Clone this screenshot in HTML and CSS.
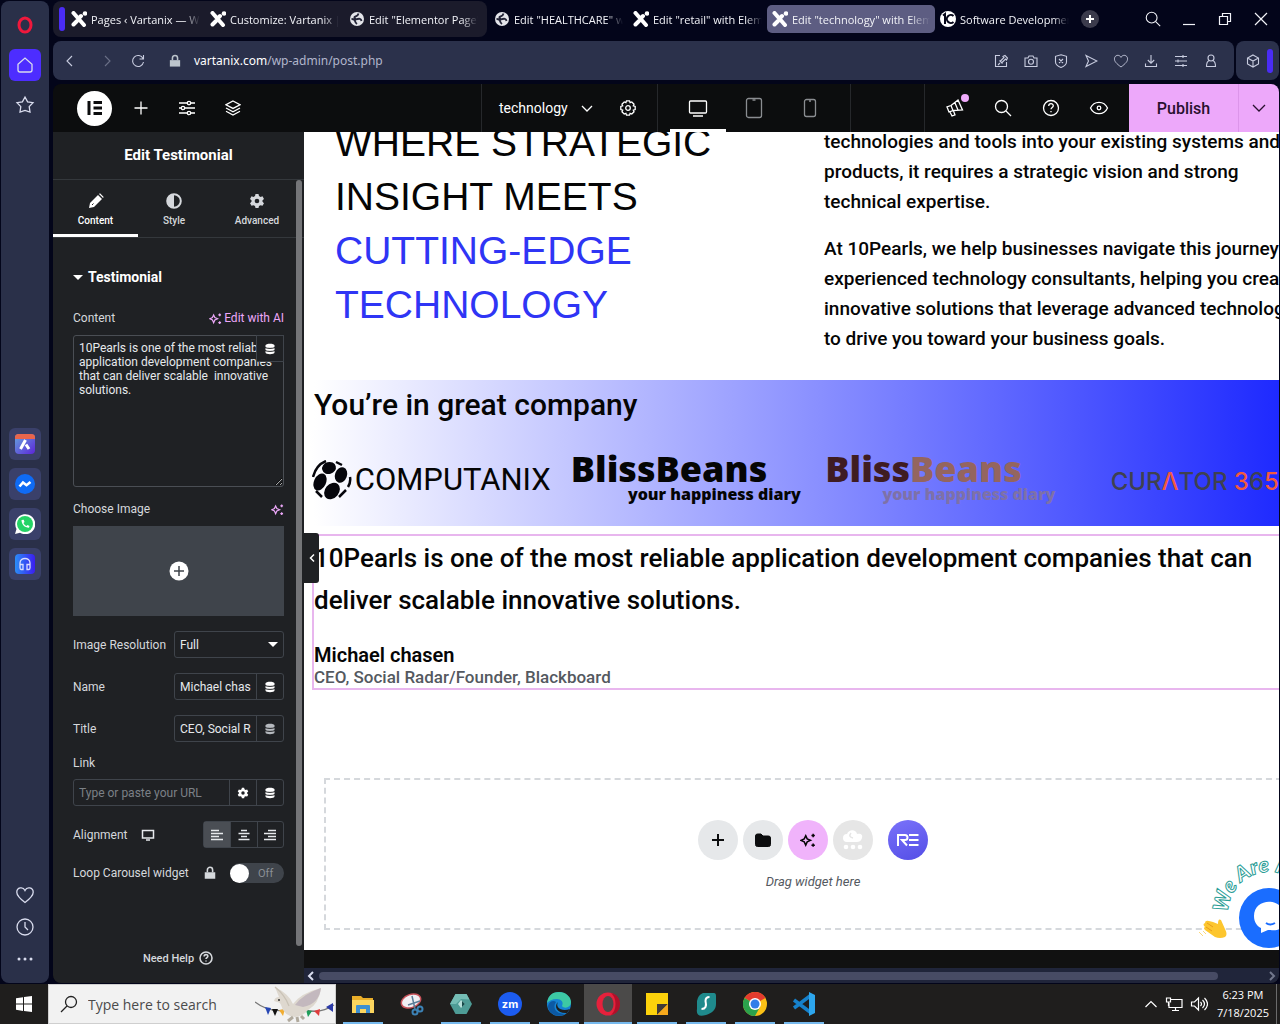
FILE: index.html
```html
<!DOCTYPE html>
<html lang="en">
<head>
    <meta charset="UTF-8">
    <meta name="viewport" content="width=device-width, initial-scale=1.0">
    <title>Edit "technology" with Elementor</title>
    <link rel="stylesheet" href="styles.css">
</head>
<body>
    <!-- Shared icons -->
    <svg class="sprite" aria-hidden="true">
        <symbol id="i-x" viewBox="0 0 16 16"><path d="M2.500 2 13 14" stroke="#fff" stroke-width="4" stroke-linecap="round"/><path d="M2.500 13.500 6 10M9 6l1-1" stroke="#fff" stroke-width="4" stroke-linecap="round"/><circle cx="14" cy="2.500" r="2.300" fill="#fff"/></symbol>
        <symbol id="i-globe" viewBox="0 0 16 16"><circle cx="8" cy="8" r="7" fill="#e4e5ea" stroke="none"/><path d="M2.500 8q3 0 3.500 2t2 3M9.500 2.500Q9 5 6.500 5.500T7 8.500q5-2 5.500 1.500" stroke="#242538" stroke-width="1.800"/></symbol>
        <symbol id="i-db" viewBox="0 0 12 12"><path d="M1.500 2.500C1.500.3 10.500.3 10.500 2.500v7c0 2.200-9 2.200-9 0z" fill="currentColor" stroke="none"/><path d="M1 4.500c2 1.200 8 1.200 10 0M1 7.500c2 1.200 8 1.200 10 0" stroke="#1f2124" stroke-width="1"/></symbol>
        <symbol id="i-gear" viewBox="0 0 16 16"><path d="M6.500 1h3l.5 2 1.500.9 2-.6 1.500 2.600-1.500 1.400v1.500l1.500 1.400-1.500 2.600-2-.6-1.500.9-.5 2h-3L6 13.100l-1.500-.9-2 .6L1 10.200l1.500-1.400V7.300L1 5.900l1.500-2.600 2 .6L6 3z" fill="currentColor" stroke="none"/><circle cx="8" cy="8" r="2.300" fill="#1f2124" stroke="none"/></symbol>
        <symbol id="i-sparkle" viewBox="0 0 14 14"><path d="M5 3.200 6.300 6 9.200 7.300 6.300 8.600 5 11.500 3.700 8.600.8 7.300 3.700 6zM11.500 1.500v3M10 3h3M11.500 10v3M10 11.500h3" stroke="currentColor" stroke-width="1.300"/></symbol>
        <symbol id="i-search" viewBox="0 0 20 20"><circle cx="8.500" cy="8.500" r="6"/><path d="m13 13 5 5"/></symbol>
        <symbol id="i-help" viewBox="0 0 20 20"><circle cx="10" cy="10" r="7.500"/><path d="M7.700 8c0-3 4.600-3 4.600-.2 0 1.700-2.300 1.700-2.300 3.500M10 13v1.300"/></symbol>
        <symbol id="i-heart" viewBox="0 0 20 20"><path d="M10 17.500C4 13 1.800 10.500 1.800 7.300 1.800 2.500 8 1.200 10 5.500c2-4.300 8.200-3 8.200 1.800 0 3.200-2.200 5.700-8.200 10.200z"/></symbol>
        <symbol id="i-lock" viewBox="0 0 14 16"><path d="M1 7h12v7.500H1z" fill="currentColor" stroke="none"/><path d="M4 7V4.500c0-4 6-4 6 0V7" stroke="currentColor" stroke-width="1.800"/></symbol>
    </svg>

    <main class="desktop">
        <nav class="rail" aria-label="Browser sidebar">
            <a href="#" class="rail-btn" aria-label="Opera"><svg width="20" height="20" viewBox="0 0 20 20"><ellipse cx="10" cy="10" rx="6" ry="7" stroke="#f0183c" stroke-width="3"/></svg></a>
            <a href="#" class="rail-btn rail-home" aria-label="Home"><svg width="20" height="20" viewBox="0 0 20 20"><path d="M3 9.200 10 3l7 6.200V15q0 2-2 2H5q-2 0-2-2z"/></svg></a>
            <a href="#" class="rail-btn" aria-label="Bookmarks"><svg width="20" height="20" viewBox="0 0 20 20"><path d="m10 2 2.600 4.800 5.400.9-3.800 3.900.8 5.400-5-1.600L5 17l.8-5.400L2 7.700l5.400-.9z"/></svg></a>
            <div class="rail-apps">
                <a href="#" class="rail-app" aria-label="Aria"><svg width="20" height="20" viewBox="0 0 20 20"><defs><linearGradient id="aria" x2="1" y2="1"><stop stop-color="#65a7dd"/><stop offset="1" stop-color="#5c25d8"/></linearGradient></defs><rect width="20" height="20" rx="4" fill="url(#aria)"/><path d="M0 5V3q0-3 4-3h12q4 0 4 3v2z" fill="#e8654c"/><path d="m5.500 15 5-9M11 10.500l3 4.500" stroke="#fff" stroke-width="3"/></svg></a>
                <a href="#" class="rail-app" aria-label="Messenger"><svg width="20" height="20" viewBox="0 0 20 20"><circle cx="10" cy="10" r="10" fill="#0f6bf5"/><path d="m4.500 12.500 3.500-4 3.500 2.700 4-3.200" stroke="#fff" stroke-width="2.600"/></svg></a>
                <a href="#" class="rail-app" aria-label="WhatsApp"><svg width="20" height="20" viewBox="0 0 20 20"><path d="m0 20 1.500-5A10 10 0 1 1 5 18.700z" fill="#fff"/><circle cx="10" cy="10" r="8" fill="#25d366"/><path d="M6.500 6c0 4.500 3 7.500 7.500 7.800l.5-1.800-2-1-1 1c-1.500-.6-2.500-1.600-3-3l1-1-.8-2.200z" fill="#fff"/></svg></a>
                <a href="#" class="rail-app" aria-label="Player"><svg width="20" height="20" viewBox="0 0 20 20"><defs><linearGradient id="play" x2="1"><stop stop-color="#2b8df7"/><stop offset="1" stop-color="#3b1df0"/></linearGradient></defs><rect width="20" height="20" rx="4" fill="url(#play)"/><path d="M5 14V9c0-6 10-6 10 0v5M5 10.500h3v5H6q-1 0-1-2zM15 10.500h-3v5h2q1 0 1-2z" stroke="#d9dcff"/></svg></a>
            </div>
            <div class="rail-bottom">
                <a href="#" class="rail-tool" aria-label="Pinboards"><svg width="20" height="20"><use href="#i-heart"/></svg></a>
                <a href="#" class="rail-tool" aria-label="History"><svg width="20" height="20" viewBox="0 0 20 20"><circle cx="10" cy="10" r="8"/><path d="M10 5v5l3 3"/></svg></a>
                <a href="#" class="rail-tool" aria-label="More"><svg width="20" height="20" viewBox="0 0 20 20"><g fill="#d9dcee" stroke="none"><circle cx="4" cy="10" r="1.500"/><circle cx="10" cy="10" r="1.500"/><circle cx="16" cy="10" r="1.500"/></g></svg></a>
            </div>
        </nav>

        <div class="browser">
            <div class="tabs">
                <div class="tab-group">
                    <span class="tab-mark"></span>
                    <a href="#" class="tab"><svg width="16" height="16"><use href="#i-x"/></svg><span>Pages ‹ Vartanix — W</span></a>
                    <a href="#" class="tab"><svg width="16" height="16"><use href="#i-x"/></svg><span>Customize: Vartanix |</span></a>
                    <a href="#" class="tab"><svg width="16" height="16"><use href="#i-globe"/></svg><span>Edit "Elementor Page"</span></a>
                </div>
                <a href="#" class="tab"><svg width="16" height="16"><use href="#i-globe"/></svg><span>Edit "HEALTHCARE" w</span></a>
                <a href="#" class="tab"><svg width="16" height="16"><use href="#i-x"/></svg><span>Edit "retail" with Elementor</span></a>
                <a href="#" class="tab tab-active"><svg width="16" height="16"><use href="#i-x"/></svg><span>Edit "technology" with Elementor</span></a>
                <a href="#" class="tab"><svg width="16" height="16" viewBox="0 0 16 16"><circle cx="8" cy="8" r="8" fill="#fff"/><path d="M3 4.500 5 3v10M13.500 5A4 4 0 1 0 13.500 11" stroke="#06071a" stroke-width="2"/></svg><span>Software Development</span></a>
                <button class="new-tab" aria-label="New tab"><svg width="12" height="12" viewBox="0 0 12 12"><path d="M6 2v8M2 6h8" stroke="#fff" stroke-width="2"/></svg></button>
                <div class="window-btns">
                    <button aria-label="Search tabs"><svg width="18" height="18"><use href="#i-search"/></svg></button>
                    <button aria-label="Minimize"><svg width="14" height="14" viewBox="0 0 14 14"><path d="M1 12.500h12"/></svg></button>
                    <button aria-label="Restore"><svg width="14" height="14" viewBox="0 0 14 14"><path d="M1.500 4.500h8v8h-8zM4.500 4V1.500h8v8H10"/></svg></button>
                    <button aria-label="Close"><svg width="14" height="14" viewBox="0 0 14 14"><path d="m1 1 12 12M13 1 1 13"/></svg></button>
                </div>
            </div>

            <div class="address-row">
                <div class="address">
                    <button class="nav-btn" aria-label="Back"><svg width="14" height="14" viewBox="0 0 14 14"><path d="M9 2 4 7l5 5"/></svg></button>
                    <button class="nav-btn nav-off" aria-label="Forward"><svg width="14" height="14" viewBox="0 0 14 14"><path d="m5 2 5 5-5 5"/></svg></button>
                    <button class="nav-btn" aria-label="Reload"><svg width="14" height="14" viewBox="0 0 14 14"><path d="M12 4.500A5.500 5.500 0 1 0 12.500 8M12.500 1v4h-4"/></svg></button>
                    <svg class="url-lock" width="12" height="14"><use href="#i-lock"/></svg>
                    <span class="url"><b>vartanix.com</b>/wp-admin/post.php</span>
                    <div class="url-tools">
                        <button aria-label="Pin"><svg width="14" height="14" viewBox="0 0 14 14"><path d="M6 1.500H1.500v11h11V8M6 9l-2 2M5.500 6.500l3 3M6.500 7 10 3.500 9 2.500l2-1 2.500 2.500-1 2-1-1L8 8.500"/></svg></button>
                        <button aria-label="Snapshot"><svg width="14" height="14" viewBox="0 0 14 14"><path d="M1 4h3l1-2h4l1 2h3v8.500H1z"/><circle cx="7" cy="7.800" r="2.500"/></svg></button>
                        <button aria-label="Ad blocker"><svg width="14" height="14" viewBox="0 0 14 14"><path d="m7 .7 5.500 1.600V8c0 3-3 4.500-5.500 5.500C4.500 12.500 1.500 11 1.500 8V2.300zM5 5l4 4M9 5 5 9"/></svg></button>
                        <button aria-label="Send"><svg width="14" height="14" viewBox="0 0 14 14"><path d="m2 1.500 11 5.500L2 12.500 4.500 7z"/></svg></button>
                        <button aria-label="Favorite"><svg width="16" height="16"><use href="#i-heart"/></svg></button>
                        <button aria-label="Downloads"><svg width="14" height="14" viewBox="0 0 14 14"><path d="M7 1v8M3.800 6 7 9.200 10.200 6M1.500 9.500v3h11v-3"/></svg></button>
                        <button aria-label="Easy setup"><svg width="14" height="14" viewBox="0 0 14 14"><path d="M1 2.500h12M1 7h12M1 11.500h12M9 1v3M4 5.500v3M9 10v3"/></svg></button>
                        <button aria-label="Profile"><svg width="14" height="14" viewBox="0 0 14 14"><circle cx="7" cy="4" r="3"/><path d="M5 6.800C3 7.500 2.500 9 2.500 12.500h9C11.500 9 11 7.500 9 6.800"/></svg></button>
                    </div>
                </div>
                <div class="extensions">
                    <button aria-label="Extensions"><svg width="14" height="14" viewBox="0 0 14 14"><path d="m7 1 5.500 3v6L7 13 1.500 10V4zM1.500 4 7 7l5.500-3M7 7v6"/></svg></button>
                    <span class="ext-mark"></span>
                </div>
            </div>

            <div class="editor">
                <header class="topbar">
                    <div class="top-left">
                        <button class="logo" aria-label="Elementor"><svg width="16" height="16" viewBox="0 0 16 16"><path d="M2 1v14M6.500 2.500H15M6.500 8H15M6.500 13.500H15" stroke="#0c0d0e" stroke-width="3"/></svg></button>
                        <button aria-label="Add element"><svg width="16" height="16" viewBox="0 0 16 16"><path d="M8 1.500v13M1.500 8h13"/></svg></button>
                        <button aria-label="Site settings"><svg width="16" height="16" viewBox="0 0 16 16"><path d="M0 3h8M12 3h4M0 8h2M6 8h10M0 13h8M12 13h4"/><circle cx="10" cy="3" r="1.700"/><circle cx="4" cy="8" r="1.700"/><circle cx="10" cy="13" r="1.700"/></svg></button>
                        <button aria-label="Structure"><svg width="16" height="16" viewBox="0 0 16 16"><path d="m8 1 7 3.700-7 3.700-7-3.700zM1 8l7 3.700L15 8M1 11.300 8 15l7-3.700"/></svg></button>
                    </div>
                    <div class="top-center">
                        <div class="doc">
                            <button class="doc-name">technology <svg width="12" height="12" viewBox="0 0 12 12"><path d="m1 4 5 5 5-5"/></svg></button>
                            <button aria-label="Page settings"><svg width="16" height="16" viewBox="0 0 16 16"><path d="M6.500.8h3l.6 1.900 1.700-.7 2.200 2.200-.7 1.700 1.900.6v3l-1.900.6.7 1.700-2.200 2.200-1.700-.7-.6 1.900h-3l-.6-1.900-1.700.7L2 11.800l.7-1.700-1.900-.6v-3l1.900-.6L2 4.200 4.200 2l1.700.7z"/><circle cx="8" cy="8" r="2.300"/></svg></button>
                        </div>
                        <div class="devices">
                            <button class="device device-on" aria-label="Desktop"><svg width="20" height="20" viewBox="0 0 20 20"><rect x="1.500" y="3" width="17" height="12" rx="1"/><path d="M5 18h10"/></svg></button>
                            <button class="device" aria-label="Tablet"><svg width="20" height="22" viewBox="0 0 20 22"><rect x="2.500" y="1.500" width="15" height="19" rx="2"/><path d="M8.500 3h3"/></svg></button>
                            <button class="device" aria-label="Mobile"><svg width="20" height="20" viewBox="0 0 20 20"><rect x="4.500" y="1.500" width="11" height="17" rx="2"/><path d="M9 3h2"/></svg></button>
                        </div>
                    </div>
                    <div class="top-right">
                        <div class="top-tools">
                            <button class="news" aria-label="What's new"><svg width="20" height="20" viewBox="0 0 20 20"><path d="m2 9 2 5 4-1.500L6 7.500zM6 7.500 13 2l4.500 10-9.500.5M5 14l2 4 3-1.200L8.500 13M10 5l3 7"/></svg><span class="dot"></span></button>
                            <button aria-label="Finder"><svg width="20" height="20"><use href="#i-search"/></svg></button>
                            <button aria-label="Help"><svg width="20" height="20"><use href="#i-help"/></svg></button>
                            <button aria-label="Preview"><svg width="20" height="20" viewBox="0 0 20 20"><path d="M1.500 10C5 2.500 15 2.500 18.500 10 15 17.500 5 17.500 1.500 10z"/><circle cx="10" cy="10" r="1.800"/></svg></button>
                        </div>
                        <button class="publish">Publish</button>
                        <button class="publish-more" aria-label="Save options"><svg width="16" height="16" viewBox="0 0 16 16"><path d="m2 5 6 6 6-6"/></svg></button>
                    </div>
                </header>

                <div class="workspace">
                    <aside class="panel">
                        <h1>Edit Testimonial</h1>
                        <div class="panel-tabs">
                            <button class="panel-tab panel-tab-on"><svg width="16" height="16" viewBox="0 0 16 16"><path d="m1 15 1-5L10 2l4 4-8 8zM11 1l1-.7L15.700 4l-.7 1z" fill="currentColor" stroke="none"/><path d="m4 12 1.500-1.500" stroke="#1f2124" stroke-width="1"/></svg>Content</button>
                            <button class="panel-tab"><svg width="16" height="16" viewBox="0 0 16 16"><circle cx="8" cy="8" r="6.800" stroke="currentColor" stroke-width="2"/><path d="M8 1.500a6.500 6.500 0 0 0 0 13z" fill="currentColor" stroke="none"/></svg>Style</button>
                            <button class="panel-tab"><svg width="16" height="16"><use href="#i-gear"/></svg>Advanced</button>
                        </div>
                        <form class="controls">
                            <h2><span class="caret"></span>Testimonial</h2>
                            <div class="row row-top">
                                <label for="content">Content</label>
                                <a href="#" class="ai"><svg width="13" height="13" viewBox="0 0 14 14"><use href="#i-sparkle" width="14" height="14"/></svg>Edit with AI</a>
                            </div>
                            <div class="area">
                                <textarea id="content">10Pearls is one of the most reliable application development companies that can deliver scalable  innovative solutions.</textarea>
                                <button type="button" class="area-db" aria-label="Dynamic tags"><svg width="12" height="12"><use href="#i-db"/></svg></button>
                            </div>
                            <div class="row row-image">
                                <span>Choose Image</span>
                                <a href="#" class="ai" aria-label="Generate with AI"><svg width="13" height="13" viewBox="0 0 14 14"><use href="#i-sparkle" width="14" height="14"/></svg></a>
                            </div>
                            <button type="button" class="media" aria-label="Choose image"><svg width="20" height="20" viewBox="0 0 20 20"><circle cx="10" cy="10" r="9.500" fill="#fff"/><path d="M10 5v10M5 10h10" stroke="#3f444b" stroke-width="1.500"/></svg></button>
                            <div class="row row-field">
                                <label for="size">Image Resolution</label>
                                <span class="field select"><select id="size"><option>Full</option></select><i class="caret"></i></span>
                            </div>
                            <div class="row row-field">
                                <label for="name">Name</label>
                                <span class="field"><input id="name" type="text" value="Michael chasen"><button type="button" aria-label="Dynamic tags"><svg width="12" height="12"><use href="#i-db"/></svg></button></span>
                            </div>
                            <div class="row row-field">
                                <label for="title">Title</label>
                                <span class="field"><input id="title" type="text" value="CEO, Social Radar/Founder, Blackboard"><button type="button" class="dim" aria-label="Dynamic tags"><svg width="12" height="12"><use href="#i-db"/></svg></button></span>
                            </div>
                            <label class="link-label" for="link">Link</label>
                            <span class="field field-wide"><input id="link" type="text" placeholder="Type or paste your URL"><button type="button" aria-label="Link options"><svg width="12" height="12"><use href="#i-gear"/></svg></button><button type="button" aria-label="Dynamic tags"><svg width="12" height="12"><use href="#i-db"/></svg></button></span>
                            <div class="row row-field">
                                <span class="with-icon">Alignment <svg width="14" height="14" viewBox="0 0 14 14"><path d="M1.500 2.500h11v7.500h-11zM5 12h4"/></svg></span>
                                <span class="field align">
                                    <button type="button" class="on" aria-label="Left"><svg width="14" height="12" viewBox="0 0 14 12"><path d="M1 1.500h8M1 4.500h12M1 7.500h8M1 10.500h12"/></svg></button>
                                    <button type="button" aria-label="Center"><svg width="14" height="12" viewBox="0 0 14 12"><path d="M4 1.500h6M1.500 4.500h11M4 7.500h6M1.500 10.500h11"/></svg></button>
                                    <button type="button" aria-label="Right"><svg width="14" height="12" viewBox="0 0 14 12"><path d="M5 1.500h8M1 4.500h12M5 7.500h8M1 10.500h12"/></svg></button>
                                </span>
                            </div>
                            <div class="row row-switch">
                                <label for="loop" class="with-icon">Loop Carousel widget <svg width="14" height="14"><use href="#i-lock"/></svg></label>
                                <span class="switch"><input id="loop" type="checkbox"><span>Off</span></span>
                            </div>
                        </form>
                        <a href="#" class="need-help">Need Help <svg width="16" height="16"><use href="#i-help"/></svg></a>
                        <span class="panel-scroll"></span>
                    </aside>

                    <section class="preview">
                        <div class="page">
                            <div class="hero">
                                <h2>WHERE STRATEGIC<br>INSIGHT MEETS<br><span>CUTTING-EDGE<br>TECHNOLOGY</span></h2>
                                <div class="hero-text">
                                    <p>technologies and tools into your existing systems and<br>products, it requires a strategic vision and strong<br>technical expertise.</p>
                                    <p>At 10Pearls, we help businesses navigate this journey with<br>experienced technology consultants, helping you create<br>innovative solutions that leverage advanced technologies<br>to drive you toward your business goals.</p>
                                </div>
                            </div>
                            <h3>You’re in great company</h3>
                            <div class="brands">
                                <div class="computanix"><svg width="40" height="40" viewBox="0 0 40 40"><g fill="#06060c"><ellipse cx="17" cy="8" rx="7" ry="6" transform="rotate(-15 17 8)"/><ellipse cx="29" cy="15" rx="6" ry="8" transform="rotate(20 29 15)"/><ellipse cx="8" cy="22" rx="6" ry="9" transform="rotate(25 8 22)"/><ellipse cx="20" cy="31" rx="9" ry="7" transform="rotate(-50 20 31)"/></g><path d="M1 17Q4 5 14 1M38 17q1 5-2 10M27 37l7-7M4 31l6 6M24 2l6 3" stroke="#06060c" stroke-width="2.500"/></svg><span>COMPUTANIX</span></div>
                                <div class="bliss"><strong>BlissBeans</strong><small>your happiness diary</small></div>
                                <div class="bliss bliss-color"><strong>Bliss<em>Beans</em></strong><small>your happiness diary</small></div>
                                <div class="curator">CUR<b>Λ</b>TOR <b>3</b>6<b>5</b></div>
                            </div>
                            <blockquote class="testimonial">
                                <p>10Pearls is one of the most reliable application development companies that can<br>deliver scalable innovative solutions.</p>
                                <cite>Michael chasen</cite>
                                <span>CEO, Social Radar/Founder, Blackboard</span>
                            </blockquote>
                            <div class="drop">
                                <div class="drop-btns">
                                    <button aria-label="Add container"><svg width="14" height="14" viewBox="0 0 14 14"><path d="M7 1v12M1 7h12" stroke-width="2"/></svg></button>
                                    <button aria-label="Add template"><svg width="18" height="16" viewBox="0 0 18 16"><path d="M1.500 4q0-2 2-2H7l2 2h5.500q2 0 2 2v6.500q0 2-2 2h-11q-2 0-2-2z" fill="#0c0d0e"/></svg></button>
                                    <button class="drop-ai" aria-label="Build with AI"><svg width="16" height="16"><use href="#i-sparkle"/></svg></button>
                                    <button class="drop-cloud" aria-label="Template cloud"><svg width="22" height="24" viewBox="0 0 22 24"><path d="M5 14a4 4 0 0 1 0-8C7 1 14 1 15 6c4-1 6 1 5 4s-3 4-5 4z" fill="#fff" stroke="none"/><path d="M9 5q-3 4 2 5" stroke="#e6e6e6" stroke-width="1.500"/><g fill="#fff" stroke="none"><circle cx="4" cy="19" r="2.300"/><circle cx="11" cy="19" r="2.300"/><circle cx="18" cy="19" r="2.300"/></g></svg></button>
                                    <button class="drop-re" aria-label="Royal Elementor Addons"><svg width="24" height="14" viewBox="0 0 24 14"><path d="M2 13V2h7q2.500 0 2.500 2.500T9 7H6l5 5.500M13 2h9.500M13 7h9.500M13 12h9.500" stroke="#fff" stroke-width="2"/></svg></button>
                                </div>
                                <p>Drag widget here</p>
                            </div>
                        </div>
                        <div class="page-footer"></div>
                        <div class="hscroll"><svg width="14" height="12" viewBox="0 0 14 12"><path d="M9 2 5 6l4 4" stroke-width="2"/></svg><span class="track"><span></span></span><svg class="hs-right" width="14" height="12" viewBox="0 0 14 12"><path d="m5 2 4 4-4 4" stroke-width="2"/></svg></div>
                        <button class="collapse" aria-label="Hide panel"><svg width="8" height="10" viewBox="0 0 8 10"><path d="M6 1.500 2.500 5 6 8.500" stroke-width="1.500"/></svg></button>
                        <svg class="chat" width="82" height="100" viewBox="0 -10 82 100">
                            <path id="arc" d="M31 55A41 41 0 0 1 113 55"/>
                            <text class="chat-text"><textPath href="#arc">We Are Here!</textPath></text>
                            <circle cx="72" cy="60" r="30" fill="#1a6dff"/>
                            <path d="M57 58c0-19 30-19 30 0s-12 13-16 14l-7 3v-5c-4-2-7-6-7-12z" fill="#fff"/>
                            <path d="M69 65q4 3 9 0" stroke="#1a6dff" stroke-width="2"/>
                            <path d="M8 65q0-3 4-2l4 1 5 2q0-6 3-4l4 9q3 6 0 8-5 2-10 0L8 72q-2-2 0-3-3-3 0-4z" fill="#fdc62e"/>
                            <path d="M10 65l6 4M9 69l6 4" stroke="#e89c1c"/><path d="M2 74l4 4M6 73l3 3" stroke="#fbd97c"/>
                        </svg>
                    </section>
                </div>
            </div>
        </div>
    </main>

    <footer class="taskbar">
        <button class="start" aria-label="Start"><svg width="16" height="16" viewBox="0 0 16 16"><path d="M0 2.300 7 1.200v6.400H0zM8 1l8-1v7.600H8zM0 8.500h7v6.400L0 13.800zM8 8.500h8V16l-8-1z" fill="#fff"/></svg></button>
        <div class="search">
            <svg width="18" height="18" viewBox="0 0 18 18"><circle cx="11" cy="7" r="5.500"/><path d="m7 11-6 6"/></svg>
            <input type="text" aria-label="Search" placeholder="Type here to search">
            <svg class="dove" width="80" height="38" viewBox="0 0 80 38">
                <path d="M0 17q14 11 32 8M50 25q16 4 29-5" stroke="#777"/>
                <path d="m10 22 6 1-3 7z" fill="#2646b4"/><path d="m17 24 6 0-3 7z" fill="#111"/><path d="m24 25 6-1-2 7z" fill="#f1ad32"/><path d="m51 25 6 1-4 6z" fill="#1e9e5a"/><path d="m59 26 6-2-1 7z" fill="#e03c3c"/><path d="m71 22 7-4 0 9z" fill="#2b3aa8"/>
                <path d="M19 16q1-4 5-4l-4-10q14 7 18 17Q46 8 66 3q-2 16-13 22-6 7-13 7-11-1-14-12-1-3-4-3z" fill="#ded8cf"/>
                <path d="M40 20Q48 9 66 3q-2 16-18 19z" fill="#c3b8be"/><path d="M20 2q10 8 14 19" stroke="#c9c2b6"/><path d="M38 32l-5 4M42 32l1 5M46 31l3 3" stroke="#b0a99c" stroke-width="3"/><circle cx="24" cy="15" r="1" fill="#333"/>
            </svg>
        </div>
        <div class="apps">
            <button class="app running" aria-label="File Explorer"><svg width="24" height="24" viewBox="0 0 24 24"><path d="M1 4h9l2 2h10v15H1z" fill="#e9ae29"/><path d="M1 8h22v13H1z" fill="#fbd55e"/><path d="M5 21v-7q0-1 1-1h12q1 0 1 1v7h-4v-4H9v4z" fill="#3d8fd1"/></svg></button>
            <button class="app" aria-label="Snipping Tool"><svg width="24" height="24" viewBox="0 0 24 24"><ellipse cx="11" cy="9" rx="10" ry="6.500" transform="rotate(-20 11 9)" fill="#f0f0f4" stroke="#c9545c" stroke-width="1.500"/><path d="m12 4 3 13M8 13l12-4" stroke="#5a7d98" stroke-width="1.500"/><circle cx="15" cy="20" r="2.500" stroke="#3c82b5" stroke-width="2"/><circle cx="20" cy="17" r="2.500" stroke="#3c82b5" stroke-width="2"/></svg></button>
            <button class="app running" aria-label="Hexagon app"><svg width="24" height="24" viewBox="0 0 24 24"><path d="M6.500 2h11L23 12l-5.500 10h-11L1 12z" fill="#4e9c96"/><path d="M6.500 2h11l3 5.500L12 7l-5 5H1z" fill="#75bdb5"/><path d="m12 8 4 4-4 4-3-4z" fill="#b7dfda"/><path d="m13 9 3 3-3 3z" fill="#174a4a"/></svg></button>
            <button class="app running" aria-label="Zoom"><svg width="24" height="24" viewBox="0 0 24 24"><circle cx="12" cy="12" r="12" fill="#1c5cf0"/><text x="12" y="16" class="zm">zm</text></svg></button>
            <button class="app running" aria-label="Edge"><svg width="24" height="24" viewBox="0 0 24 24"><circle cx="12" cy="12" r="12" fill="#1583d3"/><path d="M0 11C1 3 6 0 12 0c7 0 12 5 12 10 0 6-7 7-9 4 2-4-1-7-5-7-5 0-8 2-10 4z" fill="#3dc9a4"/><path d="M9 10c-4 6 0 12 9 12-8 5-17-1-17-8 1-5 6-6 8-4z" fill="#0c59a4"/><path d="M11 10c-3 5 3 10 12 7l-3 4C11 22 6 15 11 10z" fill="#1f1e1d"/></svg></button>
            <button class="app running current" aria-label="Opera"><svg width="24" height="24" viewBox="0 0 24 24"><circle cx="12" cy="12" r="11.500" fill="#e6213c"/><path d="M15 1c12 2 12 20 0 22 6-5 6-17 0-22z" fill="#b01029"/><ellipse cx="12" cy="12" rx="5.500" ry="8" fill="#4b4a49"/></svg></button>
            <button class="app running" aria-label="Sticky Notes"><svg width="24" height="24" viewBox="0 0 24 24"><path d="M1 1h22v22H1z" fill="#fcd20b"/><path d="M12 12h11L12 23z" fill="#413b36"/><path d="M23 12v11H12z" fill="#f5a81c"/></svg></button>
            <button class="app running" aria-label="Surfshark"><svg width="24" height="24" viewBox="0 0 24 24"><path d="M9 1h11q2 0 2 3v8c0 6-4 9-10 11-7 2-10 0-9-6V9q1-6 6-8z" fill="#1f8a8c"/><path d="M15.500 5q-4 0-4 4 2 8-4 8" stroke="#fff" stroke-width="2"/></svg></button>
            <button class="app running" aria-label="Chrome"><svg width="24" height="24" viewBox="0 0 24 24"><circle cx="12" cy="12" r="12" fill="#fbc116"/><path d="M12 12 1.600 6A12 12 0 0 1 22.400 6z" fill="#e33b2e"/><path d="M12 12 1.600 6A12 12 0 0 0 12 24l5-9z" fill="#2ba24c"/><circle cx="12" cy="12" r="6" fill="#fff"/><circle cx="12" cy="12" r="4.500" fill="#2f7de9"/></svg></button>
            <button class="app running" aria-label="Visual Studio Code"><svg width="24" height="24" viewBox="0 0 24 24"><path d="M18 4 2 16M2 8l16 12" stroke="#1681cb" stroke-width="3.500"/><path d="m17 0 6 3v18l-6 3z" fill="#2da6ed"/></svg></button>
        </div>
        <div class="tray">
            <button aria-label="Show hidden icons"><svg width="14" height="14" viewBox="0 0 14 14"><path d="m1.500 10 5.500-5.500L12.500 10"/></svg></button>
            <button aria-label="Network"><svg width="18" height="16" viewBox="0 0 18 16"><path d="M6 3.500h11v8H4V7M10.500 11.500v3M7 14.500h7M1.500 2h4v4h-4zM3.500 6v4"/></svg></button>
            <button aria-label="Volume"><svg width="18" height="16" viewBox="0 0 18 16"><path d="M1.500 6h3l4-4v12l-4-4h-3zM10.500 6q2 2 0 4M12.500 4q4 4 0 8M14.500 2q6 6 0 12"/></svg></button>
            <time>6:23 PM<br>7/18/2025</time>
            <span class="show-desktop"></span>
        </div>
    </footer>
</body>
</html>
```

FILE: styles.css
```css
* {
    box-sizing: border-box;
}
body {
    display: flex;
    flex-direction: column;
    height: 100vh;
    margin: 0;
    overflow: hidden;
    background-color: #03051a;
    font-family: Roboto, sans-serif;
    font-size: 12px;
    color: #d5d8dc;
}
h1, h2, h3, p, blockquote {
    margin: 0;
}
a {
    color: inherit;
    text-decoration: none;
}
button {
    display: flex;
    align-items: center;
    justify-content: center;
    padding: 0;
    border: 0;
    background: none;
    color: inherit;
    font: inherit;
}
svg {
    display: block;
    flex: none;
    fill: none;
    stroke: none;
}
.sprite {
    position: absolute;
    width: 0;
    height: 0;
}
.desktop {
    display: flex;
    flex: 1;
    min-height: 0;
    gap: 4px;
    padding: 1px;
}

/* Browser sidebar */
.rail {
    display: flex;
    flex-direction: column;
    align-items: center;
    gap: 8px;
    width: 48px;
    padding: 8px 0;
    border-radius: 8px;
    background-color: #2a3049;
}
.rail svg {
    stroke: #d9dcee;
    stroke-width: 1.3;
}
.rail .rail-app svg {
    stroke: none;
}
.rail-btn, .rail-app {
    display: flex;
    align-items: center;
    justify-content: center;
    width: 32px;
    height: 32px;
    border-radius: 6px;
}
.rail-home {
    background-color: #4d2dff;
}
.rail-apps {
    display: flex;
    flex-direction: column;
    justify-content: center;
    gap: 8px;
    flex: 1;
    padding-top: 8px;
}
.rail-app {
    background-color: #3a406a;
}
.rail-bottom {
    display: flex;
    flex-direction: column;
}
.rail-tool {
    display: flex;
    align-items: center;
    height: 32px;
}

/* Tab strip */
.browser {
    display: flex;
    flex-direction: column;
    flex: 1;
    min-width: 0;
}
.tabs {
    display: flex;
    align-items: center;
    height: 40px;
    padding-bottom: 4px;
    font-family: "Open Sans", sans-serif;
    font-size: 11px;
    color: #f2f3f8;
}
.tab-group {
    display: flex;
    align-items: center;
    height: 36px;
    margin-right: 2px;
    padding: 0 4px 0 6px;
    border-radius: 8px;
    background-color: #1b1b2b;
}
.tab-mark, .ext-mark {
    width: 6px;
    height: 24px;
    border-radius: 3px;
    background-color: #4a2cf5;
}
.tab-mark {
    margin-right: 1px;
}
.tab {
    display: flex;
    align-items: center;
    gap: 4px;
    width: 139px;
    height: 28px;
    padding: 0 5px;
    white-space: nowrap;
}
.tab span {
    flex: 1;
    overflow: hidden;
    -webkit-mask-image: linear-gradient(90deg, #000 85%, transparent);
    mask-image: linear-gradient(90deg, #000 85%, transparent);
}
.tab-active {
    width: 168px;
    border-radius: 5px;
    background-color: #5d5d82;
}
.new-tab {
    width: 18px;
    height: 18px;
    margin-left: 7px;
    border-radius: 50%;
    background-color: #3b3b4c;
}
.window-btns {
    display: flex;
    margin-left: auto;
}
.window-btns button {
    width: 36px;
}
.window-btns svg {
    stroke: #f2f3f8;
    stroke-width: 1.2;
}

/* Address bar */
.address-row {
    display: flex;
    gap: 2px;
    height: 39px;
    margin-bottom: 4px;
}
.address {
    display: flex;
    align-items: center;
    flex: 1;
    padding: 0 8px 0 2px;
    border-radius: 8px;
    background-color: #2b314b;
}
.address svg, .extensions svg {
    stroke: #c9cde0;
    stroke-width: 1.1;
}
.nav-btn {
    width: 30px;
    height: 30px;
    margin-right: 7px;
}
.nav-off {
    margin-right: 1px;
    opacity: 0.4;
}
.address .url-lock {
    margin-left: 9px;
    color: #bcc4cc;
    stroke: none;
}
.url {
    margin-left: 13px;
    font-family: "Noto Sans", sans-serif;
    color: #b1b6cb;
}
.url b {
    font-weight: 400;
    color: #fff;
}
.url-tools {
    display: flex;
    margin-left: auto;
}
.url-tools button {
    width: 30px;
}
.extensions {
    display: flex;
    align-items: center;
    justify-content: space-between;
    width: 43px;
    padding: 0 6px 0 10px;
    border-radius: 8px;
    background-color: #2b314b;
}

/* Editor top bar */
.editor {
    display: flex;
    flex-direction: column;
    flex: 1;
    min-height: 0;
    overflow: hidden;
    border-radius: 8px;
    background-color: #0c0d0e;
}
.topbar {
    display: grid;
    grid-template-columns: 1fr auto 1fr;
    height: 48px;
    color: #fff;
}
.topbar svg {
    stroke: #fff;
    stroke-width: 1.3;
}
.top-left, .top-center, .doc, .devices, .top-right, .top-tools {
    display: flex;
    align-items: center;
}
.top-left {
    gap: 30px;
    padding-left: 24px;
}
.logo {
    width: 35px;
    height: 35px;
    margin-right: -9px;
    border-radius: 50%;
    background-color: #fff;
}
.doc, .devices, .top-tools {
    height: 48px;
    border-left: 1px solid #26282b;
}
.doc {
    gap: 27px;
    width: 176px;
    padding-left: 17px;
}
.doc-name {
    gap: 13px;
    font-size: 14px;
}
.devices {
    padding: 0 12px;
    border-right: 1px solid #26282b;
}
.device {
    width: 56px;
    height: 48px;
    border-top: 3px solid transparent;
    border-bottom: 3px solid transparent;
}
.topbar .device svg {
    stroke: #8a8d91;
}
.topbar .device-on svg {
    stroke: #fff;
}
.device-on {
    border-bottom-color: #fff;
}
.top-right {
    justify-content: flex-end;
}
.top-tools {
    padding: 0 6px;
}
.top-tools button {
    width: 48px;
    height: 48px;
}
.news {
    position: relative;
}
.dot {
    position: absolute;
    top: 10px;
    right: 10px;
    width: 8px;
    height: 8px;
    border-radius: 50%;
    background-color: #f0abfc;
}
.publish, .publish-more {
    height: 48px;
    background-color: #eda8fa;
    color: #28102e;
}
.publish {
    width: 109px;
    font-size: 16px;
    font-weight: 500;
}
.publish-more {
    width: 41px;
    border-left: 1px solid #dc95ea;
}
.topbar .publish-more svg {
    stroke: #28102e;
}

/* Settings panel */
.workspace {
    display: flex;
    flex: 1;
    min-height: 0;
}
.panel {
    display: flex;
    flex-direction: column;
    position: relative;
    width: 251px;
    background-color: #1f2124;
}
.panel h1 {
    height: 48px;
    border-bottom: 1px solid #34383c;
    font-size: 15px;
    line-height: 46px;
    text-align: center;
    color: #fff;
}
.panel-tabs {
    display: flex;
    height: 58px;
    border-bottom: 1px solid #34383c;
}
.panel-tab {
    flex: 1 1 auto;
    flex-direction: column;
    gap: 6px;
    padding-top: 5px;
    border-bottom: 3px solid transparent;
    font-size: 10px;
    font-weight: 500;
}
.panel-tab-on {
    border-bottom-color: #fff;
    color: #fff;
}
.controls {
    display: flex;
    flex-direction: column;
    flex: 1;
    padding: 29px 20px 0;
}
.panel h2 {
    display: flex;
    align-items: center;
    height: 20px;
    font-size: 14px;
    color: #fff;
}
.caret {
    border: 5px solid transparent;
    border-top-color: currentColor;
    border-bottom-width: 0;
}
.panel h2 .caret {
    margin-right: 5px;
}
.row {
    display: flex;
    align-items: center;
    justify-content: space-between;
}
.row-top {
    height: 18px;
    margin: 22px 0 8px;
}
.ai {
    display: flex;
    align-items: center;
    gap: 2px;
    color: #eda8fa;
}
.area {
    position: relative;
    height: 152px;
}
textarea {
    width: 100%;
    height: 152px;
    padding: 5px;
    border: 1px solid #4a4e54;
    border-radius: 3px;
    background: none;
    font: 12px/14px Roboto, sans-serif;
    color: #e6e9ec;
    outline: 0;
    resize: vertical;
    overflow: hidden;
    white-space: pre-wrap;
}
.area-db {
    position: absolute;
    top: 0;
    right: 0;
    width: 28px;
    height: 27px;
    border: 1px solid #3f444b;
    background-color: #1f2124;
    color: #fff;
}
.row-image {
    height: 18px;
    margin: 13px 0 8px;
}
.media {
    height: 90px;
    background-color: #3f444b;
}
.row-field {
    height: 27px;
    margin-top: 15px;
}
.field {
    display: flex;
    width: 110px;
    height: 27px;
    border: 1px solid #3f444b;
    border-radius: 3px;
    color: #fff;
}
.field input, .field select {
    flex: 1;
    width: 0;
    min-width: 0;
    padding: 0 5px;
    border: 0;
    background: none;
    font: 12px Roboto, sans-serif;
    color: #e6e9ec;
    outline: 0;
    appearance: none;
}
.field input::placeholder {
    color: #7b8086;
}
.field button {
    width: 27px;
    border-left: 1px solid #3f444b;
}
.field .dim {
    color: #b5b9be;
}
.select {
    align-items: center;
    padding-right: 5px;
}
.link-label {
    margin: 12px 0 7px;
    line-height: 18px;
}
.field-wide {
    width: 100%;
}
.with-icon {
    display: flex;
    align-items: center;
    gap: 14px;
}
.with-icon svg, .align svg {
    stroke: #e6e9ec;
    stroke-width: 1.5;
}
.align {
    width: 81px;
}
.align button:first-child {
    border-left: 0;
}
.align .on {
    background-color: #4a4e54;
}
.row-switch {
    height: 20px;
    margin-top: 15px;
}
.row-switch svg {
    stroke: none;
}
.switch {
    display: flex;
    align-items: center;
    width: 54px;
    height: 20px;
    border-radius: 10px;
    background-color: #3f444b;
    font-size: 11px;
    color: #8a8f95;
}
.switch input {
    width: 19px;
    height: 19px;
    margin: 0 9px 0 0;
    border-radius: 50%;
    background-color: #fff;
    appearance: none;
}
.need-help {
    display: flex;
    align-items: center;
    justify-content: center;
    gap: 4px;
    height: 50px;
    font-size: 11px;
    font-weight: 500;
}
.need-help svg {
    stroke: #d5d8dc;
    stroke-width: 2;
}
.panel-scroll {
    position: absolute;
    top: 48px;
    right: 2px;
    bottom: 37px;
    width: 6px;
    border-radius: 3px;
    background-color: #747578;
}

/* Page preview */
.preview {
    display: flex;
    flex-direction: column;
    flex: 1;
    min-width: 0;
    position: relative;
    overflow: hidden;
    background-color: #111;
}
.page {
    width: calc(100% + 43px);
    background-color: #fff;
    color: #050505;
}
.hero {
    display: grid;
    grid-template-columns: 1fr 1fr;
    height: 265px;
    margin-top: -17px;
}
.hero h2 {
    padding: 1px 0 0 31px;
    font: 39px/54px "Liberation Sans", Arial, sans-serif;
    white-space: nowrap;
}
.hero h2 span {
    color: #2f35f5;
}
.hero-text {
    padding: 12px 0 0 11px;
    font-size: 19px;
    font-weight: 500;
    line-height: 30px;
    white-space: nowrap;
}
.hero-text p + p {
    margin-top: 17px;
}
.page h3 {
    height: 50px;
    padding-left: 10px;
    background: linear-gradient(90deg, #fff 1%, #1420ff);
    font-size: 30px;
    font-weight: 500;
    line-height: 50px;
}
.brands {
    display: grid;
    grid-template-columns: repeat(4, 1fr);
    align-items: center;
    justify-items: center;
    height: 96px;
    background: linear-gradient(87deg, #fff 1%, #1420ff);
    white-space: nowrap;
}
.computanix {
    display: flex;
    align-items: center;
    gap: 3px;
    padding-top: 3px;
    font-size: 31px;
}
.bliss {
    display: flex;
    flex-direction: column;
    width: 230px;
    font-family: "Open Sans", sans-serif;
    font-weight: 800;
}
.bliss strong {
    font-size: 36px;
    font-weight: 800;
    line-height: 32px;
}
.bliss small {
    align-self: flex-end;
    font-size: 16px;
    line-height: 18px;
}
.bliss-color {
    color: #3f1c22;
}
.bliss em {
    font-style: normal;
    color: #94655f;
}
.bliss-color small {
    color: #7e71a8;
}
.curator {
    padding-top: 6px;
    font: 500 24px Inter, sans-serif;
    color: #3f4150;
}
.curator b {
    font-weight: 500;
    color: #f15a3d;
}
.testimonial {
    display: flex;
    flex-direction: column;
    margin: 8px 8px 88px;
    padding-top: 1px;
    border: 2px solid #e8b6ee;
    white-space: nowrap;
}
.testimonial p {
    margin-bottom: 22px;
    font-size: 26px;
    font-weight: 500;
    line-height: 42px;
}
.testimonial cite {
    font-size: 20px;
    font-style: normal;
    font-weight: 600;
    line-height: 24px;
}
.testimonial span {
    font-size: 17px;
    font-weight: 500;
    line-height: 21px;
    color: #54595f;
}
.drop {
    height: 152px;
    margin: 0 20px;
    padding-top: 40px;
    border: 2px dashed #d5d8dc;
    text-align: center;
}
.page::after {
    content: "";
    display: block;
    height: 20px;
}
.drop-btns {
    display: flex;
    justify-content: center;
    gap: 5px;
}
.drop-btns button {
    width: 40px;
    height: 40px;
    border-radius: 50%;
    background-color: #e6e8ea;
}
.drop-btns svg {
    stroke: #0c0d0e;
}
.drop-btns .drop-ai {
    background-color: #f0b3fb;
}
.drop-btns .drop-cloud {
    background-color: #e6e6e6;
}
.drop-btns .drop-re {
    margin-left: 10px;
    background: linear-gradient(160deg, #7a72fa, #544ee6);
}
.drop p {
    margin-top: 12px;
    font-size: 13px;
    font-style: italic;
    line-height: 20px;
    color: #54595f;
}
.page-footer {
    flex: 1;
}
.hscroll {
    display: flex;
    align-items: center;
    height: 15px;
    background-color: #20253a;
}
.hscroll svg {
    stroke: #d9dcee;
}
.hscroll .hs-right {
    stroke: #71778c;
}
.track {
    flex: 1;
    padding-left: 1px;
}
.track span {
    display: block;
    width: 95%;
    height: 8px;
    border-radius: 4px;
    background-color: #474b64;
}
.collapse {
    position: absolute;
    top: 401px;
    left: 0;
    width: 15px;
    height: 50px;
    border-radius: 0 3px 3px 0;
    background-color: #1f2124;
}
.collapse svg {
    stroke: #fff;
}
.chat {
    position: absolute;
    right: 0;
    bottom: 35px;
}
.chat-text {
    font: italic 900 21px Lato, sans-serif;
    fill: #fff;
    stroke: #2a9d96;
    stroke-width: 1;
}

/* Windows taskbar */
.taskbar {
    display: flex;
    height: 40px;
    background-color: #1f1e1d;
    color: #fff;
}
.start {
    width: 48px;
}
.search {
    display: flex;
    align-items: center;
    width: 288px;
    padding-left: 11px;
    border: 1px solid #cfcfcf;
    background-color: #f2f2f2;
}
.search svg {
    stroke: #222;
    stroke-width: 1.3;
}
.search .dove {
    stroke: none;
}
.search input {
    flex: 1;
    min-width: 0;
    padding: 0 0 0 10px;
    border: 0;
    background: none;
    font: 14px "Open Sans", sans-serif;
    outline: 0;
}
.search input::placeholder {
    color: #4b4b4b;
}
.apps {
    display: flex;
    gap: 1px;
    padding-left: 3px;
}
.app {
    position: relative;
    width: 48px;
}
.running::after {
    content: "";
    position: absolute;
    bottom: 0;
    left: 4px;
    right: 4px;
    height: 2px;
    background-color: #76b9ed;
}
.current {
    background-color: #4b4a49;
}
.current::after {
    left: 0;
    right: 0;
}
.zm {
    font: 700 11px Inter, sans-serif;
    text-anchor: middle;
    fill: #fff;
}
.tray {
    display: flex;
    align-items: center;
    margin-left: auto;
    gap: 7px;
}
.tray svg {
    stroke: #fff;
    stroke-width: 1.2;
}
.tray time {
    margin-left: 2px;
    font: 11px/18px "Open Sans", sans-serif;
    text-align: center;
}
.show-desktop {
    width: 4px;
    height: 40px;
    border-left: 1px solid #6b6b6b;
}
```
